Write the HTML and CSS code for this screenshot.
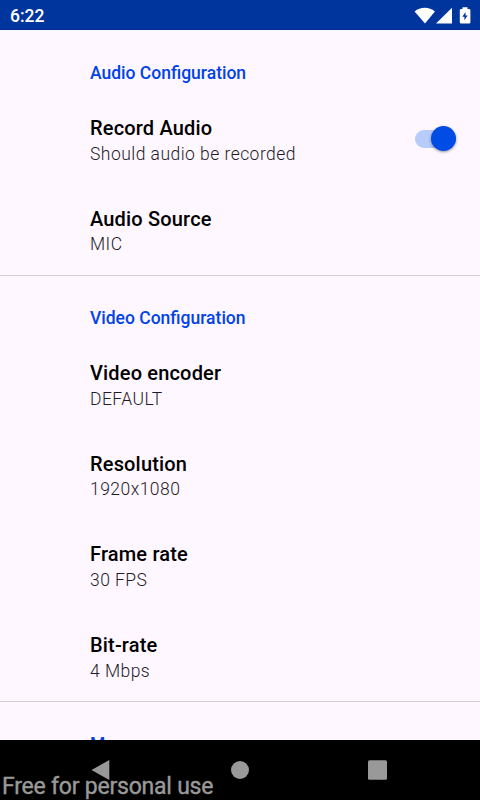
FILE: index.html
```html
<!DOCTYPE html>
<html lang="en">
<head>
<meta charset="utf-8">
<title>Settings</title>
<link rel="stylesheet" href="styles.css">
</head>
<body>
<header class="status">
  <span class="clock">6:22</span>
  <svg class="status-icons" width="58" height="20" viewBox="0 0 58 20">
    <path d="M0.6 5.5C6.2 .6 15.3 .6 20.9 5.5L11 17.5Z"/>
    <path d="M22 17.5L38 1.7V17.5Z"/>
    <path fill-rule="evenodd" d="M48.5 3V1.2H53.5V3H55.1Q56.4 3 56.4 4.3V16.3Q56.4 17.6 55.1 17.6H47.1Q45.8 17.6 45.8 16.3V4.3Q45.8 3 47.1 3ZM51.5 6L48.3 10.8H50.4V14.2L53.6 9.4H51.5Z"/>
  </svg>
</header>
<main>
  <section>
    <h2>Audio Configuration</h2>
    <div class="row switch-row">
      <div><h3>Record Audio</h3><p>Should audio be recorded</p></div>
      <div class="switch"><span class="thumb"></span></div>
    </div>
    <div class="row"><div><h3>Audio Source</h3><p>MIC</p></div></div>
  </section>
  <section class="video">
    <h2>Video Configuration</h2>
    <div class="row"><div><h3>Video encoder</h3><p>DEFAULT</p></div></div>
    <div class="row"><div><h3>Resolution</h3><p>1920x1080</p></div></div>
    <div class="row"><div><h3>Frame rate</h3><p>30 FPS</p></div></div>
    <div class="row"><div><h3>Bit-rate</h3><p>4 Mbps</p></div></div>
  </section>
  <section class="more"><h2>More</h2></section>
</main>
<nav>
  <svg width="480" height="60" viewBox="0 0 480 60">
    <path d="M91.5 30L109.3 20V40Z"/>
    <circle cx="240" cy="30" r="9"/>
    <rect x="368" y="20.3" width="19" height="19.4" rx="1.5"/>
  </svg>
  <span class="watermark">Free for personal use</span>
</nav>
</body>
</html>
```
FILE: styles.css
```css
* { box-sizing: border-box; }
body {
  margin: 0;
  height: 800px;
  display: flex;
  flex-direction: column;
  overflow: hidden;
  background: #fef7ff;
  font-family: Roboto, sans-serif;
}
.status {
  height: 30px;
  flex: none;
  display: flex;
  align-items: center;
  justify-content: space-between;
  padding: 0 8px 0 10px;
  background: #00359e;
  border-bottom: 1px solid #002991;
  color: #fff;
}
.clock { font-size: 17.5px; font-weight: 500; padding-top: 2px; }
.status-icons { fill: #fff; position: relative; top: 1px; }
main { height: 710px; flex: none; overflow: hidden; }
section { height: 245px; }
.video { height: 426px; }
section + section { border-top: 1px solid #d4ced6; }
h2, h3, p { margin: 0; white-space: nowrap; }
h2 {
  height: 64px;
  padding: 33px 0 0 90px;
  font-size: 17.5px;
  line-height: 21px;
  font-weight: 500;
  color: #0043e8;
}
.video h2 { height: 63.3px; padding-top: 32px; }
.more h2 { padding-top: 32px; }
.row {
  height: 90.6px;
  padding: 22px 20px 0 90px;
  display: flex;
  justify-content: space-between;
}
h3 { font-size: 20px; line-height: 24px; font-weight: 500; letter-spacing: .17px; color: #000; }
p { margin-top: 2.6px; font-size: 17.5px; line-height: 22px; font-weight: 300; letter-spacing: .46px; color: #1f1b28; }
.switch {
  width: 41px;
  height: 17.5px;
  margin: 14px 4px 0 0;
  border-radius: 9px;
  background: #b8ccfa;
  display: flex;
  align-items: center;
  justify-content: flex-end;
}
.thumb {
  width: 25px;
  height: 25px;
  flex: none;
  border-radius: 50%;
  background: #004ce5;
  box-shadow: 0 1px 3px rgba(0, 0, 0, .4);
}
nav { height: 60px; flex: none; position: relative; background: #000; }
nav svg { display: block; fill: #999; }
.watermark {
  position: absolute;
  left: 2px;
  top: 33px;
  font-size: 23px;
  line-height: 27px;
  letter-spacing: -.22px;
  color: #999;
  -webkit-text-stroke: .4px #999;
}
```
